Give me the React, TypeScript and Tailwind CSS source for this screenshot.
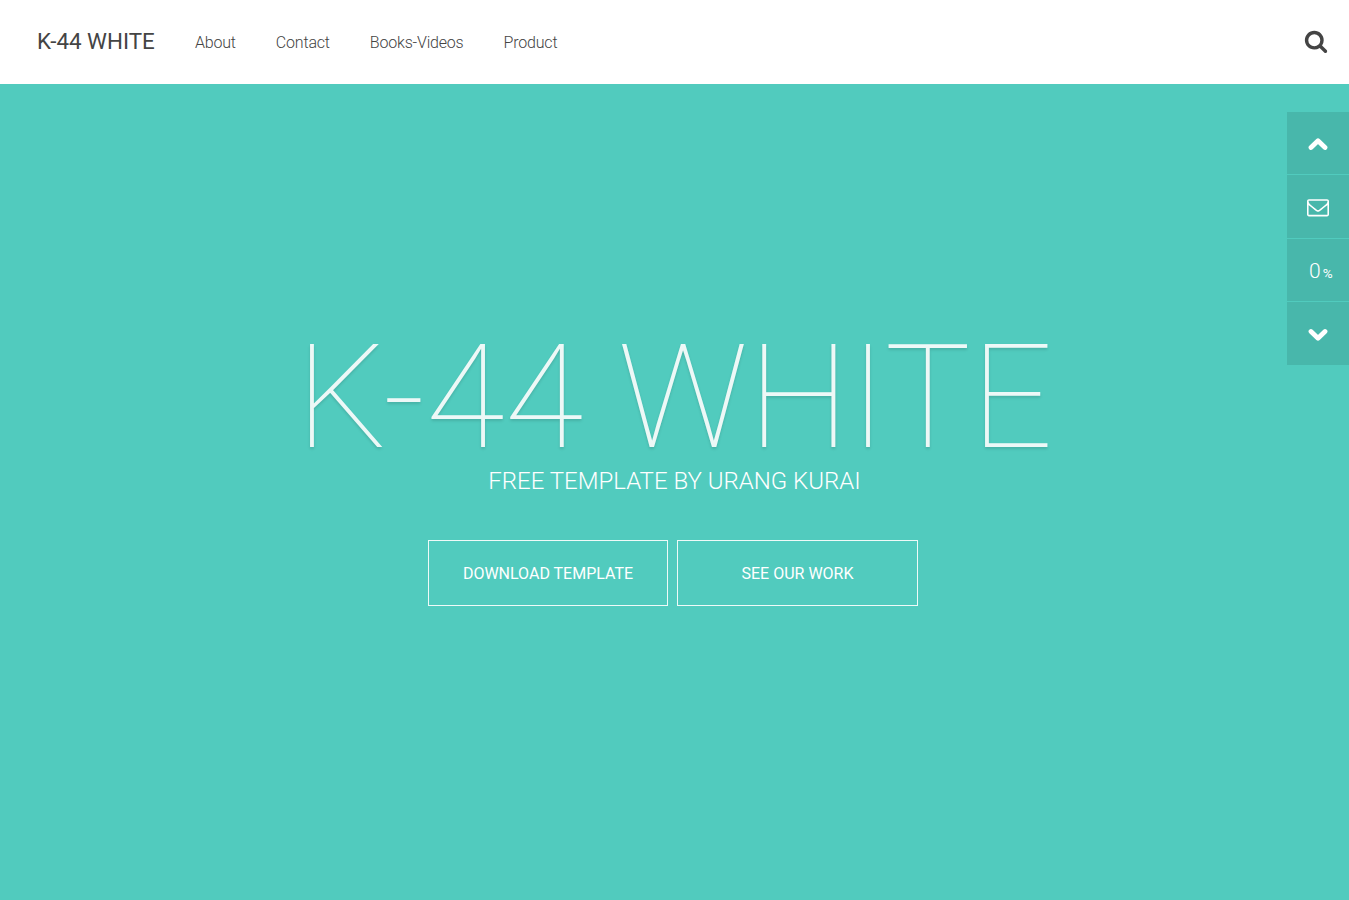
const links = ["About", "Contact", "Books-Videos", "Product"]

function SearchIcon() {
  return (
    <svg viewBox="0 0 1792 1792" fill="currentColor" className="mb-0.5 ml-auto size-6">
      <path d="M1216 832q0-185-131.5-316.5t-316.5-131.5-316.5 131.5-131.5 316.5 131.5 316.5 316.5 131.5 316.5-131.5 131.5-316.5zm512 832q0 52-38 90t-90 38q-54 0-90-38l-343-342q-179 124-399 124-143 0-273.5-55.5t-225-150-150-225-55.5-273.5 55.5-273.5 150-225 225-150 273.5-55.5 273.5 55.5 225 150 150 225 55.5 273.5q0 220-124 399l343 343q37 37 37 90z" />
    </svg>
  )
}

function EnvelopeIcon() {
  return (
    <svg viewBox="0 0 1792 1792" fill="currentColor" className="size-[22px]">
      <path d="M1664 1504v-768q-32 36-69 66-268 206-426 338-51 43-83 67t-86.5 48.5-102.5 24.5h-2q-48 0-102.5-24.5t-86.5-48.5-83-67q-158-132-426-338-37-30-69-66v768q0 13 9.5 22.5t22.5 9.5h1472q13 0 22.5-9.5t9.5-22.5zm0-1051v-24.5l-.5-13-3-12.5-5.5-9-9-7.5-14-2.5h-1472q-13 0-22.5 9.5t-9.5 22.5q0 168 147 284 193 152 401 317 6 5 35 29.5t46 37.5 44.5 31.5 50.5 27.5 43 9h2q20 0 43-9t50.5-27.5 44.5-31.5 46-37.5 35-29.5q208-165 401-317 54-43 100.5-115.5t46.5-131.5zm128-37v1088q0 66-47 113t-113 47h-1472q-66 0-113-47t-47-113v-1088q0-66 47-113t113-47h1472q66 0 113 47t47 113z" />
    </svg>
  )
}

function Chevron({ down = false }: { down?: boolean }) {
  return (
    <svg
      viewBox="0 0 20 14"
      fill="none"
      stroke="currentColor"
      strokeWidth="4.8"
      strokeLinecap="round"
      strokeLinejoin="round"
      className="h-3.5 w-5"
    >
      <path d={down ? "M3 3.5 10 10.2 17 3.5" : "M3 10.5 10 3.8 17 10.5"} />
    </svg>
  )
}

export default function App() {
  return (
    <div className="flex h-[900px] flex-col overflow-hidden bg-[#51cbbe] font-['Roboto',sans-serif]">
      <header className="flex h-[84px] shrink-0 items-center bg-white pl-[37px] pr-[21px] text-[#444]">
        <a href="#" className="w-[158px] pb-px text-[22.4px] tracking-[-0.03px]">K-44 WHITE</a>
        <nav className="flex gap-10 pt-0.5 text-base font-light tracking-[-0.19px]">
          {links.map((link) => (
            <a key={link} href="#">{link}</a>
          ))}
        </nav>
        <SearchIcon />
      </header>

      <main className="relative flex flex-1 flex-col items-center pt-[253px] text-white">
        <h1 className="text-[144px] leading-[121px] font-thin text-white/90 [text-shadow:0_2px_3px_rgba(0,0,0,0.13)]">
          K-44 WHITE
        </h1>
        <p className="mt-[7px] text-2xl leading-8 font-light">FREE TEMPLATE BY URANG KURAI</p>
        <div className="mt-[43px] mr-[3px] flex gap-[9px]">
          <a href="#" className="flex h-[66px] w-[240px] items-center justify-center border border-white/90 pt-0.5">DOWNLOAD TEMPLATE</a>
          <a href="#" className="flex h-[66px] w-[241px] items-center justify-center border border-white/90 pt-0.5">SEE OUR WORK</a>
        </div>

        {/* page scroller */}
        <aside className="absolute top-7 right-0 flex w-[62px] flex-col gap-px">
          <a href="#" className="flex h-[62px] items-center justify-center bg-[#48b7ab] pt-0.5"><Chevron /></a>
          <a href="#" className="flex h-[63px] items-center justify-center bg-[#48b7ab]"><EnvelopeIcon /></a>
          <div className="flex h-[62px] items-baseline bg-[#48b7ab] pt-4 pl-[22px] text-[21px] leading-8 font-light">
            0<span className="ml-0.5 text-[13.5px] font-normal">%</span>
          </div>
          <a href="#" className="flex h-[63px] items-center justify-center bg-[#48b7ab] pt-0.5"><Chevron down /></a>
        </aside>
      </main>
    </div>
  )
}
